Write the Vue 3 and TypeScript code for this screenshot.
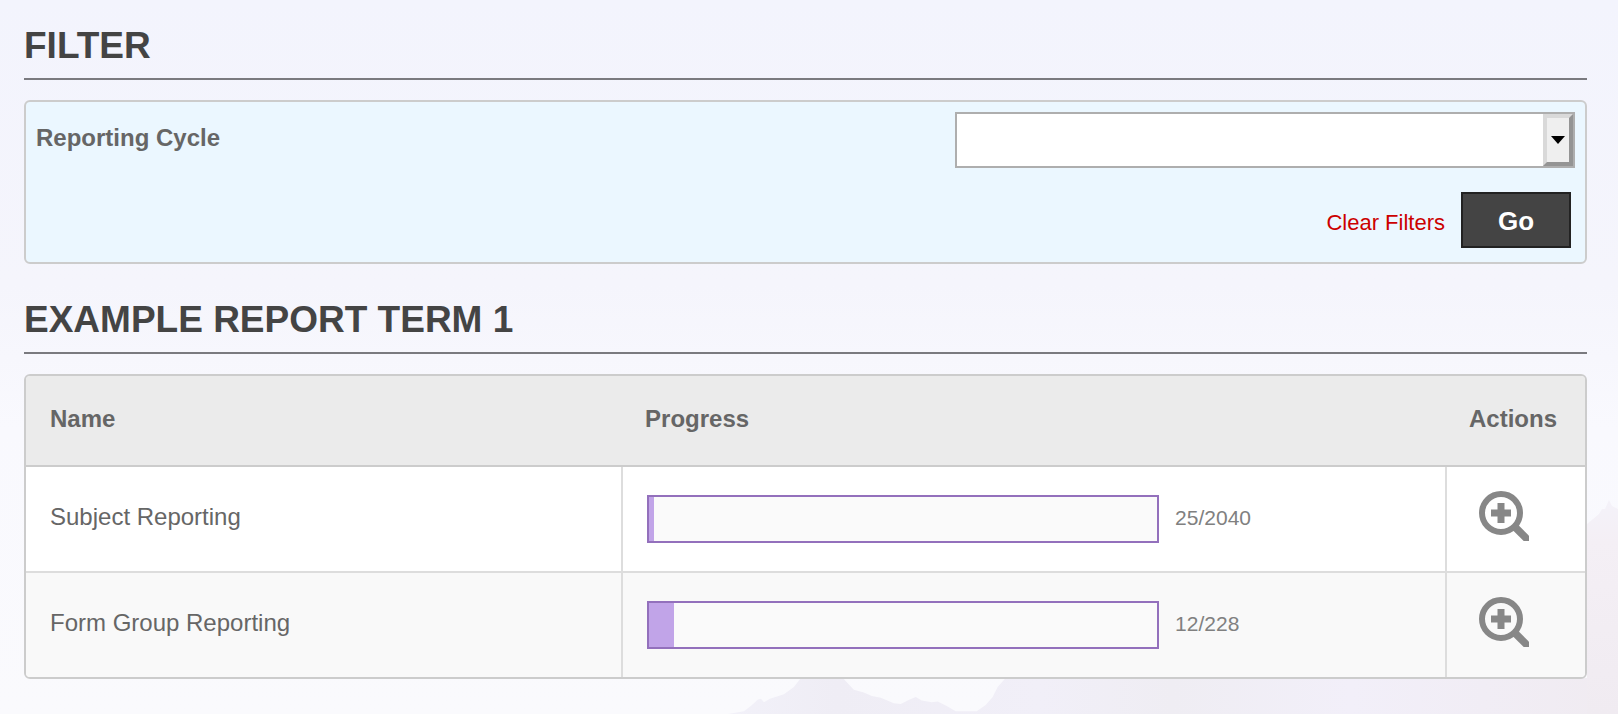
<script setup lang="ts">
import { ref } from 'vue'

interface ReportRow {
  name: string
  done: number
  total: number
}

const cycle = ref('')
const rows: ReportRow[] = [
  { name: 'Subject Reporting', done: 25, total: 2040 },
  { name: 'Form Group Reporting', done: 12, total: 228 },
]

const fill = (row: ReportRow): string => `${Math.floor((row.done / row.total) * 100)}%`
</script>

<template>
  <main class="page">
    <svg class="scenery range" viewBox="0 0 891 40" preserveAspectRatio="none" aria-hidden="true">
      <defs>
        <linearGradient id="haze" x1="0" y1="0" x2="1" y2="0">
          <stop offset="0" stop-color="#f2f1f9" />
          <stop offset="0.12" stop-color="#efedf5" />
          <stop offset="0.35" stop-color="#f1eff8" />
          <stop offset="0.5" stop-color="#efedf3" />
          <stop offset="0.7" stop-color="#f2eff9" />
          <stop offset="1" stop-color="#f0ebf1" />
        </linearGradient>
      </defs>
      <path
        fill="url(#haze)"
        d="M0 40 16 37 24 30 30 24 33 23 36 27 42 23 56 18 66 10 73 0H115L126 13 136 16 144 20 153 22 166 28 173 29 182 24 188 21 194 25 204 27 210 26 219 31 228 37H249L258 30 265 21 270 10 278 0H891V40Z"
      />
    </svg>
    <svg class="scenery peak" viewBox="0 0 31 214" preserveAspectRatio="none" aria-hidden="true">
      <defs>
        <linearGradient id="slope" x1="0" y1="0" x2="0" y2="1">
          <stop offset="0" stop-color="#f4f2f9" />
          <stop offset="0.2" stop-color="#f4eff5" />
          <stop offset="1" stop-color="#f0ebf1" />
        </linearGradient>
      </defs>
      <path fill="url(#slope)" d="M0 24 6 19 12 14 15 9 18 9 22 0 25 6 31 9V214H0Z" />
    </svg>

    <h1 class="heading">FILTER</h1>
    <form class="filter" @submit.prevent>
      <div class="field">
        <label for="cycle">Reporting Cycle</label>
        <div class="picker">
          <select id="cycle" v-model="cycle">
            <option value=""></option>
          </select>
          <span class="drop" aria-hidden="true">
            <svg width="14" height="8" viewBox="0 0 14 8"><path d="M0 0H14L7 8Z" /></svg>
          </span>
        </div>
      </div>
      <div class="buttons">
        <a href="#">Clear Filters</a>
        <button type="submit">Go</button>
      </div>
    </form>

    <h1 class="heading">EXAMPLE REPORT TERM 1</h1>
    <table class="reports">
      <thead>
        <tr>
          <th class="name" scope="col">Name</th>
          <th class="status" scope="col">Progress</th>
          <th class="actions" scope="col">Actions</th>
        </tr>
      </thead>
      <tbody>
        <tr v-for="row in rows" :key="row.name">
          <td>{{ row.name }}</td>
          <td>
            <div class="progress">
              <div
                class="bar"
                role="progressbar"
                :aria-label="row.name"
                :aria-valuenow="row.done"
                :aria-valuemax="row.total"
              >
                <div class="done" :style="{ width: fill(row) }"></div>
              </div>
              <span class="count">{{ row.done }}/{{ row.total }}</span>
            </div>
          </td>
          <td class="actions">
            <a class="view" href="#" :aria-label="`View ${row.name}`">
              <svg width="50" height="50" viewBox="0 0 50 50" fill="none" stroke="#878787">
                <circle cx="22" cy="22" r="19" stroke-width="6" />
                <path d="M22 12V32M12 22H32" stroke-width="7" />
                <path d="M34 34 52 52" stroke-width="7.5" />
              </svg>
            </a>
          </td>
        </tr>
      </tbody>
    </table>
  </main>
</template>

<style>
body {
  margin: 0;
}
</style>

<style scoped>
.page {
  position: relative;
  box-sizing: border-box;
  min-height: 100vh;
  padding: 24px 31px 35px 24px;
  overflow: hidden;
  background: linear-gradient(#f3f4fd, #f5f5fc 40%, #f9f9fe 60%, #fafafd);
  color: #666;
  font-family: "Liberation Sans", Arial, sans-serif;
  font-size: 24px;
  line-height: 28px;
}

.scenery {
  position: absolute;
  right: 0;
  bottom: 0;
}

.range {
  width: 55%;
  height: 36px;
}

.peak {
  width: 31px;
  height: 214px;
}

.heading {
  margin: 0 0 20px;
  padding-bottom: 10px;
  border-bottom: 2px solid #7a7a7f;
  color: #444;
  font-size: 37px;
  line-height: 44px;
}

.filter {
  display: flex;
  flex-direction: column;
  gap: 24px;
  margin-bottom: 34px;
  padding: 10px 10px 14px;
  border: 2px solid #ccc;
  border-radius: 6px;
  background: #ebf7ff;
}

.field {
  display: flex;
  justify-content: space-between;
}

.field label {
  padding-top: 12px;
  font-weight: bold;
}

.picker {
  position: relative;
  flex: 0 1 620px;
  height: 56px;
}

.picker select {
  box-sizing: border-box;
  width: 100%;
  height: 100%;
  padding: 0 40px 0 10px;
  border: 2px solid #aeaeae;
  border-radius: 0;
  appearance: none;
  background: #fff;
  color: #666;
  font: inherit;
}

.drop {
  position: absolute;
  top: 2px;
  right: 2px;
  bottom: 2px;
  display: flex;
  align-items: center;
  justify-content: center;
  width: 22px;
  border: 4px solid;
  border-color: #d9d9d9 #949494 #949494 #d9d9d9;
  background: #efefef;
  pointer-events: none;
}

.buttons {
  display: flex;
  align-items: center;
  justify-content: flex-end;
  gap: 16px;
  padding-right: 4px;
}

.buttons a {
  padding-top: 6px;
  color: #c00;
  font-size: 22px;
  text-decoration: none;
}

.buttons button {
  width: 110px;
  height: 56px;
  padding: 2px 0 0;
  border: 2px solid #222;
  background: #444;
  color: #fff;
  font: bold 26px "Liberation Sans", Arial, sans-serif;
}

.reports {
  position: relative;
  width: 100%;
  table-layout: fixed;
  border: 2px solid #ccc;
  border-radius: 6px;
  border-spacing: 0;
  overflow: hidden;
}

th,
td {
  box-sizing: border-box;
  padding: 0 24px;
  text-align: left;
}

th {
  height: 91px;
  padding-bottom: 4px;
  border-bottom: 2px solid #ccc;
  background: #ebebeb;
}

th.name {
  width: 38.3%;
}

th.status {
  padding-left: 22px;
}

th.actions {
  width: 138px;
  padding: 0 22px 4px;
}

td {
  height: 104px;
  border-right: 2px solid #ddd;
  background: #fff;
}

td:last-child {
  border-right: 0;
}

tr + tr td {
  border-top: 2px solid #ddd;
  height: 106px;
  background: #f9f9f9;
}

td:first-child {
  padding-bottom: 4px;
}

td.actions {
  padding-left: 32px;
}

.progress {
  display: flex;
  align-items: center;
  gap: 16px;
}

.bar {
  flex: 0 1 508px;
  height: 44px;
  border: 2px solid #9370bc;
  background: #fafafa;
}

.done {
  height: 100%;
  background: #c1a4e8;
}

.count {
  padding-bottom: 2px;
  color: #808080;
  font-size: 21px;
}

.view {
  display: block;
  height: 50px;
  padding-bottom: 6px;
}
</style>
